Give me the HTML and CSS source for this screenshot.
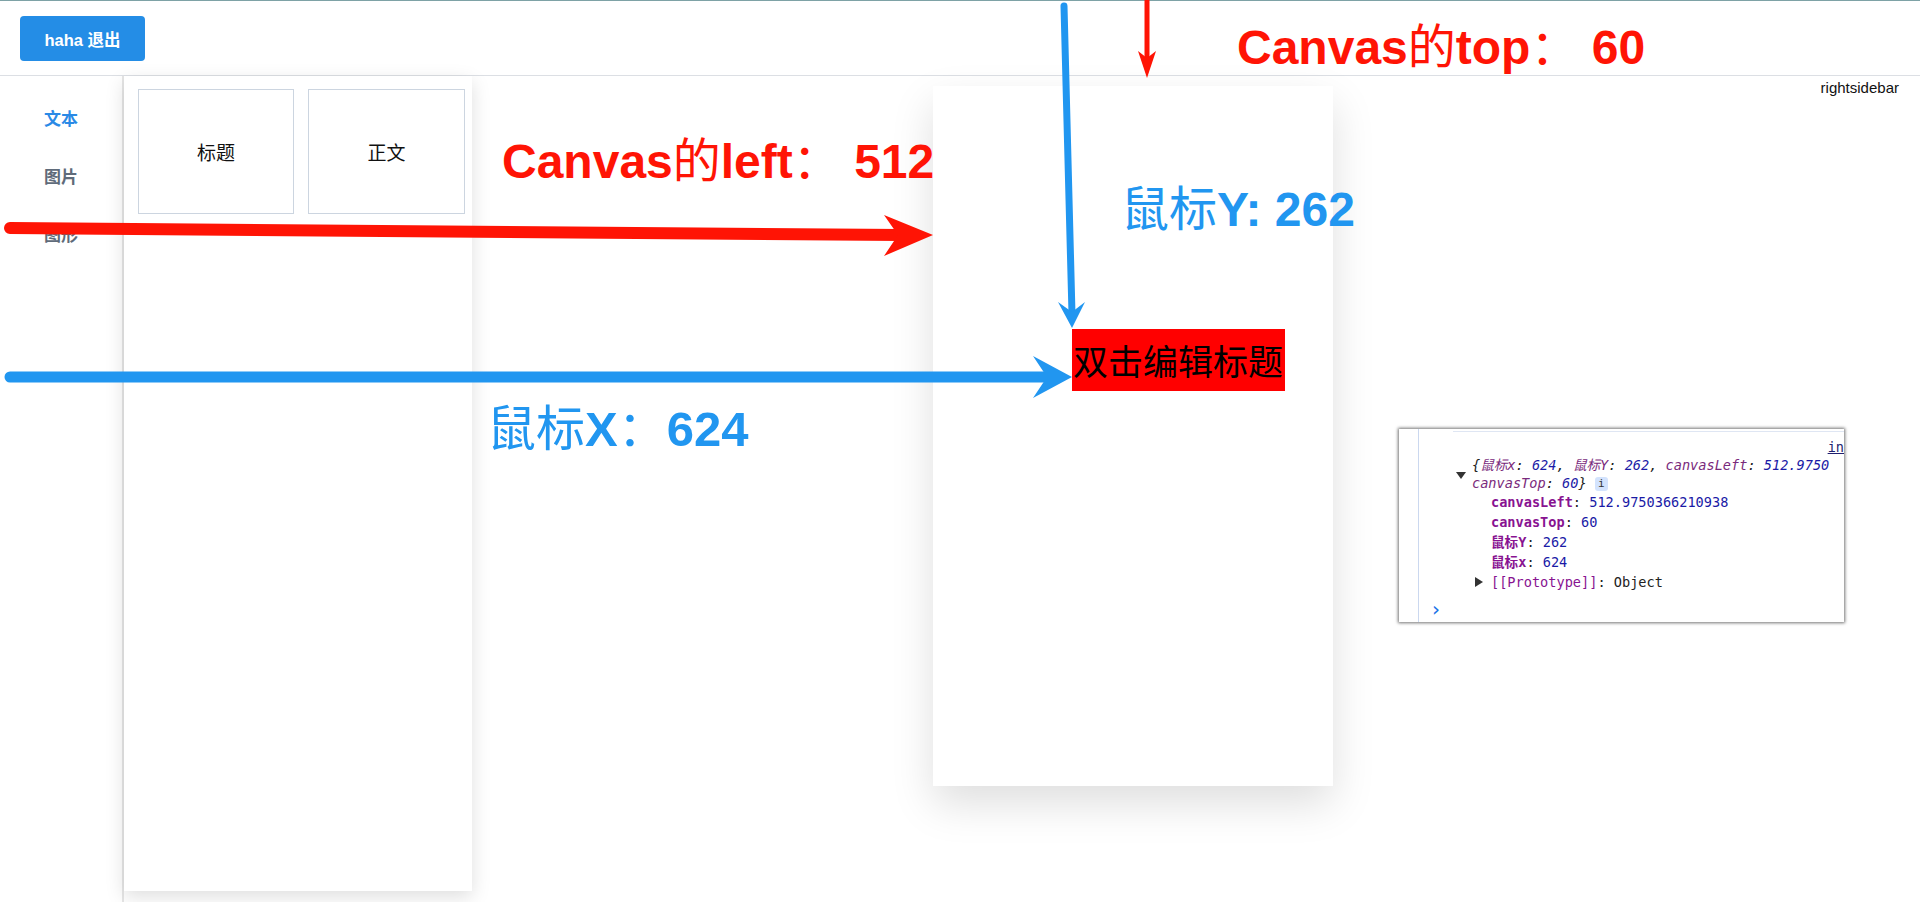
FILE: index.html
```html
<!DOCTYPE html>
<html lang="zh-CN">
<head>
<meta charset="utf-8">
<title>editor</title>
<link rel="stylesheet" href="styles.css">
</head>
<body>
<div class="app">
  <header class="topbar">
    <button class="btn-exit">haha 退出</button>
  </header>
  <div class="main">
    <nav class="menu">
      <div class="menu-item active">文本</div>
      <div class="menu-item">图片</div>
      <div class="menu-item">图形</div>
    </nav>
    <aside class="panel">
      <div class="cards">
        <div class="card">标题</div>
        <div class="card card-wide">正文</div>
      </div>
    </aside>
    <section class="stage">
      <div class="canvas">
        <div class="title-el">双击编辑标题</div>
      </div>
    </section>
    <aside class="rightbar">rightsidebar</aside>
  </div>
</div>

<div class="note note-top red">Canvas<span class="cjk">的</span>top<span class="cjk">：</span> 60</div>
<div class="note note-left red">Canvas<span class="cjk">的</span>left<span class="cjk">：</span> 512</div>
<div class="note note-y blue"><span class="cjk">鼠标</span>Y: 262</div>
<div class="note note-x blue"><span class="cjk">鼠标</span>X<span class="cjk">：</span>624</div>

<svg class="arrows" width="1920" height="902" viewBox="0 0 1920 902">
  <g class="arrow-red">
    <line x1="10" y1="228" x2="902" y2="235" stroke-width="12" stroke-linecap="round"/>
    <polygon points="933,235 884,215 898,235 884,256"/>
    <line x1="1147" y1="-4" x2="1147" y2="58" stroke-width="5"/>
    <polygon points="1147,78 1138,51 1147,58 1156,51"/>
  </g>
  <g class="arrow-blue">
    <line x1="10" y1="377" x2="1048" y2="377" stroke-width="11" stroke-linecap="round"/>
    <polygon points="1072,377 1033,356 1047,377 1033,398"/>
    <line x1="1064" y1="6" x2="1072" y2="314" stroke-width="7" stroke-linecap="round"/>
    <polygon points="1072,328 1058,302 1072,312 1085,302"/>
  </g>
</svg>

<div class="console">
  <div class="gutter"></div>
  <div class="topline"></div>
  <div class="row row-link"><span class="link">in</span></div>
  <div class="preview">
    <span class="tri-down"></span>
    <div class="preview-text">
      <div class="row">{<span class="k">鼠标x</span>: <span class="v">624</span>, <span class="k">鼠标Y</span>: <span class="v">262</span>, <span class="k">canvasLeft</span>: <span class="v">512.9750</span></div>
      <div class="row"><span class="k">canvasTop</span>: <span class="v">60</span>} <span class="badge">i</span></div>
    </div>
  </div>
  <div class="props">
    <div class="prop"><span class="pk">canvasLeft</span>: <span class="v">512.9750366210938</span></div>
    <div class="prop"><span class="pk">canvasTop</span>: <span class="v">60</span></div>
    <div class="prop"><span class="pk">鼠标Y</span>: <span class="v">262</span></div>
    <div class="prop"><span class="pk">鼠标x</span>: <span class="v">624</span></div>
    <div class="prop proto"><span class="tri-right"></span><span class="pp">[[Prototype]]</span>: Object</div>
  </div>
  <div class="prompt">&#x203A;</div>
</div>
</body>
</html>
```

FILE: styles.css
```css
* { box-sizing: border-box; }

html, body {
  margin: 0;
  padding: 0;
  width: 1920px;
  height: 902px;
  overflow: hidden;
  background: #ffffff;
  font-family: "Liberation Sans", "Noto Sans CJK SC", sans-serif;
  color: #000;
}

.app {
  display: flex;
  flex-direction: column;
  height: 902px;
}

.topbar {
  height: 76px;
  border-top: 1px solid #7ea2a6;
  border-bottom: 1px solid #dcdfe4;
  padding: 15px 0 0 20px;
  flex: none;
}

.btn-exit {
  width: 125px;
  height: 45px;
  border: none;
  border-radius: 4px;
  background: #248de6;
  color: #fff;
  font-family: "Liberation Sans", "Noto Sans CJK SC", sans-serif;
  font-weight: 700;
  font-size: 16.5px;
  padding: 0;
}

.main {
  flex: 1;
  display: flex;
  min-height: 0;
}

.menu {
  width: 124px;
  flex: none;
  border-right: 2px solid #e6e6e6;
  padding-top: 15px;
}

.menu-item {
  height: 58px;
  line-height: 58px;
  text-align: center;
  font-size: 17px;
  font-weight: 700;
  color: #5f6b7a;
}

.menu-item.active { color: #2a8ae6; }

.panel {
  width: 348px;
  flex: none;
  margin-bottom: 11px;
  background: #fff;
  box-shadow: 0 6px 18px rgba(0, 0, 0, 0.13);
  position: relative;
  z-index: 1;
}

.cards {
  display: grid;
  grid-template-columns: 156px 157px;
  column-gap: 14px;
  padding: 13px 0 0 14px;
}

.card {
  height: 125px;
  border: 1px solid #ccd5e0;
  display: flex;
  align-items: center;
  justify-content: center;
  font-size: 19px;
  color: #111;
}

.stage {
  flex: 1;
  display: flex;
  justify-content: center;
  align-items: flex-start;
  padding-top: 10px;
}

.canvas {
  width: 400px;
  height: 700px;
  background: #fff;
  position: relative;
  box-shadow: 0 18px 40px rgba(0, 0, 0, 0.13);
}

.title-el {
  position: absolute;
  left: 139px;
  top: 243px;
  width: 213px;
  height: 62px;
  line-height: 62px;
  background: #ff0000;
  color: #000;
  font-size: 35px;
  padding-left: 1px;
  white-space: nowrap;
  font-family: "Noto Sans CJK SC", sans-serif;
}

.rightbar {
  width: 126px;
  flex: none;
  text-align: right;
  padding: 3px 21px 0 0;
  font-size: 15px;
  line-height: 18px;
  color: #111;
}

/* annotations */
.note {
  position: absolute;
  font-family: "Liberation Sans", "Noto Sans CJK SC", sans-serif;
  font-weight: 700;
  font-size: 48px;
  line-height: 48px;
  white-space: nowrap;
  z-index: 5;
}

.note .cjk { font-weight: 400; }
.red { color: #ff1405; }
.blue { color: #2196f0; }

.note-top { left: 1237px; top: 24px; }
.note-left { left: 502px; top: 138px; }
.note-y { left: 1121px; top: 186px; }
.note-x { left: 487px; top: 405px; font-size: 49px; line-height: 49px; }

.arrows {
  position: absolute;
  left: 0;
  top: 0;
  pointer-events: none;
  z-index: 6;
}

.arrow-red line { stroke: #ff1405; }
.arrow-red polygon { fill: #ff1405; }
.arrow-blue line { stroke: #2196f0; }
.arrow-blue polygon { fill: #2196f0; }

/* console screenshot */
.console {
  position: absolute;
  left: 1399px;
  top: 429px;
  width: 445px;
  height: 193px;
  background: #fff;
  box-shadow: 0 0 3px 1px rgba(0, 0, 0, 0.55);
  overflow: hidden;
  z-index: 4;
  padding-top: 9px;
  font-family: "DejaVu Sans Mono", "Noto Sans CJK SC", monospace;
  font-size: 13.6px;
  color: #222;
  white-space: nowrap;
}

.gutter {
  position: absolute;
  left: 19px;
  top: 0;
  bottom: 0;
  width: 1px;
  background: #cbd8ef;
}

.topline {
  position: absolute;
  left: 54px;
  right: 0;
  top: 2px;
  height: 1px;
  background: #dfe6f3;
}

.row {
  height: 18px;
  line-height: 18px;
}

.row-link {
  text-align: right;
  padding-right: 0;
}

.link {
  color: #1f1f6f;
  text-decoration: underline;
}

.preview {
  display: flex;
  align-items: center;
  padding-left: 57px;
}

.tri-down {
  width: 0;
  height: 0;
  border-left: 5px solid transparent;
  border-right: 5px solid transparent;
  border-top: 7px solid #333;
  margin-right: 6px;
  margin-top: 2px;
}

.preview-text { font-style: italic; }
.preview-text .k { color: #7a2a7c; }
.v { color: #1a1aa6; }

.badge {
  display: inline-block;
  font-style: normal;
  background: #d3e3fd;
  color: #333;
  border-radius: 3px;
  width: 13px;
  height: 14px;
  line-height: 14px;
  text-align: center;
  font-size: 11px;
  vertical-align: middle;
}

.props { padding-left: 92px; }

.prop {
  height: 20px;
  line-height: 20px;
}

.pk {
  color: #881391;
  font-weight: 700;
}

.proto { margin-left: -16px; display: flex; align-items: center; }

.tri-right {
  width: 0;
  height: 0;
  border-top: 5px solid transparent;
  border-bottom: 5px solid transparent;
  border-left: 8px solid #333;
  margin-right: 8px;
}

.pp { color: #881391; }

.prompt {
  margin-top: 7px;
  padding-left: 33px;
  height: 20px;
  line-height: 20px;
  color: #1a73e8;
  font-size: 20px;
  font-family: "DejaVu Sans", sans-serif;
}
```
